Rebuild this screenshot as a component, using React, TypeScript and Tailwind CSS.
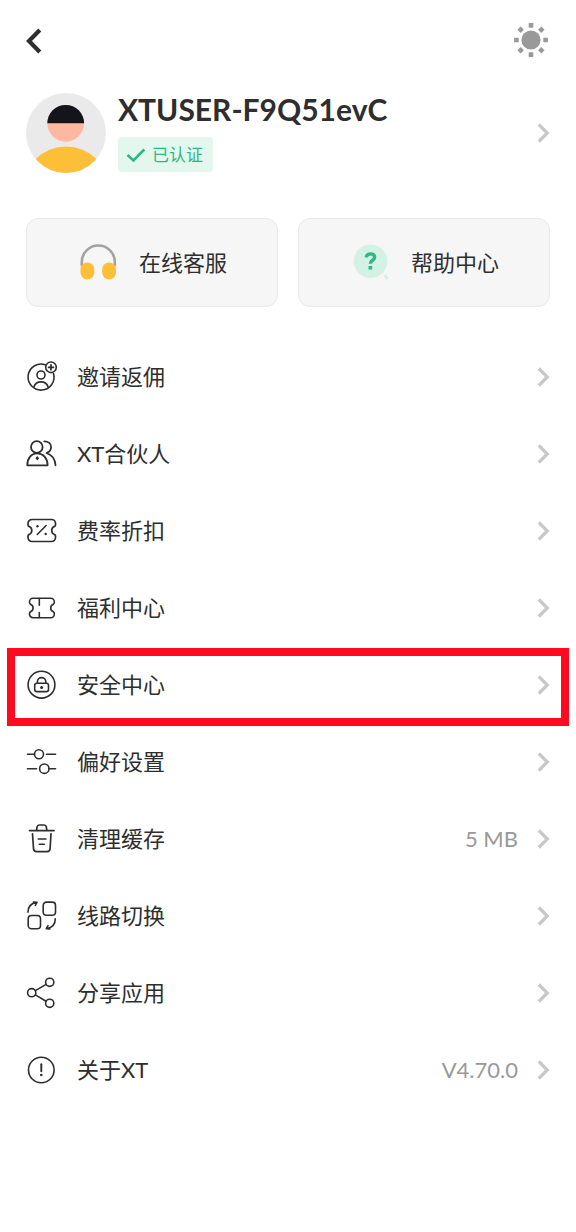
import type { ReactNode } from 'react';

function Chevron() {
  return (
    <svg className="h-6 w-4 shrink-0 text-[#c8c8c8]" viewBox="0 0 16 24" fill="none" stroke="currentColor" strokeWidth="3.2" aria-hidden="true">
      <path d="M4.8 3.5 13.3 12 4.8 20.5" />
    </svg>
  );
}

function LineIcon({ children }: { children: ReactNode }) {
  return (
    <svg
      className="size-8 shrink-0 overflow-visible text-[#2e2e2e]"
      viewBox="0 0 32 32"
      fill="none"
      stroke="currentColor"
      strokeWidth="1.6"
      strokeLinecap="round"
      strokeLinejoin="round"
      aria-hidden="true"
    >
      {children}
    </svg>
  );
}

const icons = {
  invite: (
    <LineIcon>
      <path d="M19.3 3.8A13 13 0 1 0 27.5 12.4" />
      <circle cx="25" cy="6.3" r="5.3" />
      <path d="M25 3.9v4.8M22.6 6.3h4.8" strokeWidth="1.8" />
      <circle cx="15" cy="14" r="4" />
      <path d="M7.8 26.3a7.5 7.5 0 0 1 14.4 0" />
    </LineIcon>
  ),
  partner: (
    <LineIcon>
      <circle cx="10.8" cy="9" r="5.8" strokeWidth="1.8" />
      <path d="M1.3 27.3c0-7.2 4-12 9.9-12s10.4 4.8 10.4 12z" strokeWidth="1.8" />
      <path d="m11.3 18 1.8 2.3-1.8 2.3-1.8-2.3z" fill="currentColor" stroke="none" />
      <path d="M18.2 3.3c4.2 0 6.9 2.5 6.900 5.800 0 2.900-1.700 5-4.600 5.900 5.300 1.700 8.600 6.200 9 12.300" strokeWidth="1.8" />
    </LineIcon>
  ),
  fee: (
    <LineIcon>
      <path
        d="M6 4.500h19.500a4 4 0 0 1 4 4v1.400c0 .8-.5 1.400-1.300 1.700a4.300 4.300 0 0 0 0 7.800c.8.3 1.300.9 1.300 1.700v1.400a4 4 0 0 1-4 4H6a4 4 0 0 1-4-4v-1.400c0-.8.5-1.400 1.300-1.700a4.300 4.300 0 0 0 0-7.800C2.500 11.300 2 10.700 2 9.900V8.500a4 4 0 0 1 4-4z"
        strokeWidth="1.7"
      />
      <path d="m11.300 19.500 8.800-9" />
      <circle cx="11.500" cy="11.200" r="1.200" fill="currentColor" stroke="none" />
      <circle cx="19.700" cy="19" r="1.200" fill="currentColor" stroke="none" />
    </LineIcon>
  ),
  welfare: (
    <LineIcon>
      <path d="M7 6.300h17.800a3.500 3.500 0 0 1 3.500 3.500v.8c0 .8-.4 1.300-1.100 1.700a4 4 0 0 0 0 7.400c.7.400 1.100.9 1.100 1.700v.8a3.500 3.500 0 0 1-3.500 3.500H7a3.500 3.500 0 0 1-3.500-3.500v-.8c0-.8.4-1.300 1.100-1.700a4 4 0 0 0 0-7.400c-.7-.4-1.100-.9-1.100-1.700v-.8A3.500 3.500 0 0 1 7 6.300z" />
      <path d="M13.300 6.500v6.700M13.300 20.500v5" />
    </LineIcon>
  ),
  lock: (
    <LineIcon>
      <circle cx="15.500" cy="15.700" r="13.400" />
      <rect x="8.700" y="14.300" width="13.800" height="8.300" rx="2.200" />
      <path d="M11.400 14.200v-1.400a4.200 4.200 0 0 1 8.400 0v1.400" />
      <circle cx="15.600" cy="18.500" r="1.500" fill="currentColor" stroke="none" />
    </LineIcon>
  ),
  sliders: (
    <LineIcon>
      <circle cx="13" cy="8.300" r="4.500" />
      <path d="M1.500 8.300h7M20.500 8.300h9" />
      <circle cx="18.300" cy="22.700" r="4.700" />
      <path d="M1.500 22.700h9M23 22.700h6.500" />
    </LineIcon>
  ),
  trash: (
    <LineIcon>
      <path d="M3.500 7.600h24.600M10.500 7.400l.6-3.500c.2-1.300.9-1.900 2.200-1.900h4.800c1.300 0 2 .6 2.200 1.900l.6 3.500" strokeWidth="1.7" />
      <path d="m6.500 10.800 1 14.700c.1 2 1.200 3.100 3.200 3.100h10.200c2 0 3.100-1.100 3.200-3.100l.9-14.700" strokeWidth="1.7" />
      <path d="M12.300 16H20M13.300 21.300h5" />
    </LineIcon>
  ),
  route: (
    <LineIcon>
      <rect x="17.200" y="2.100" width="12.300" height="13.200" rx="3.300" />
      <rect x="2.200" y="15.500" width="12.300" height="13.200" rx="3.300" />
      <path d="M2 12.300c0-5.300 3-9 8.600-9.900M7.400 2l3.600.3-1.700 3" />
      <path d="M29.300 18.700c0 5.300-3 9-8.600 9.900M23.900 29l-3.600-.3 1.700-3" />
    </LineIcon>
  ),
  share: (
    <LineIcon>
      <circle cx="5.700" cy="15.700" r="4.100" />
      <circle cx="23.700" cy="5.300" r="4.100" />
      <circle cx="23.700" cy="26.300" r="4.100" />
      <path d="m9.400 13.600 10.700-6.200M9.400 17.900l10.700 6.300" />
    </LineIcon>
  ),
  about: (
    <LineIcon>
      <circle cx="15.300" cy="16" r="12.800" />
      <path d="M15.300 10.300v7" strokeWidth="1.9" />
      <circle cx="15.300" cy="21" r="1.300" fill="currentColor" stroke="none" />
    </LineIcon>
  ),
};

type Item = { label: string; icon: ReactNode; value?: string; highlighted?: boolean };

const items: Item[] = [
  { label: '邀请返佣', icon: icons.invite },
  { label: 'XT合伙人', icon: icons.partner },
  { label: '费率折扣', icon: icons.fee },
  { label: '福利中心', icon: icons.welfare },
  { label: '安全中心', icon: icons.lock, highlighted: true },
  { label: '偏好设置', icon: icons.sliders },
  { label: '清理缓存', icon: icons.trash, value: '5 MB' },
  { label: '线路切换', icon: icons.route },
  { label: '分享应用', icon: icons.share },
  { label: '关于XT', icon: icons.about, value: 'V4.70.0' },
];

function MenuRow({ label, icon, value, highlighted }: Item) {
  return (
    <li className="relative">
      <button type="button" className="flex h-[77px] w-full items-center text-left">
        {icon}
        <span className="ml-[19px] text-[22px] leading-8">{label}</span>
        <span className="ml-auto mr-4 text-[22px] leading-8 text-[#999999]">{value}</span>
        <Chevron />
      </button>
      {highlighted && (
        <div className="pointer-events-none absolute -inset-x-[19px] -bottom-[3px] top-0.5 border-8 border-[#ff0a20]" />
      )}
    </li>
  );
}

function Avatar() {
  return (
    <svg className="size-20 shrink-0" viewBox="0 0 80 80" role="img" aria-label="头像">
      <clipPath id="avatar-clip">
        <circle cx="40" cy="40" r="40" />
      </clipPath>
      <g clipPath="url(#avatar-clip)">
        <rect width="80" height="80" fill="#eaeaea" />
        <circle cx="40" cy="96.500" r="43" fill="#fdbf37" />
        <circle cx="39.700" cy="30.300" r="18.400" fill="#ffb8a0" />
        <path d="M21.300 30.300a18.400 18.400 0 0 1 36.800 0z" fill="#14141c" />
      </g>
    </svg>
  );
}

const cardClass =
  'flex h-[89px] items-center justify-center gap-[22px] rounded-xl border border-[#e9e9e9] bg-[#f6f6f6] text-[22px] leading-8';

export default function App() {
  return (
    <main className="min-h-screen bg-white px-[26px] font-[Lato,'Noto_Sans_CJK_SC',sans-serif] text-[#2e2e2e]">
      <header className="flex h-20 items-center justify-between">
        <button type="button" aria-label="返回">
          <svg className="h-8 w-4" viewBox="0 0 16 32" fill="none" stroke="currentColor" strokeWidth="4.200">
            <path d="M13.800 6 3 17 13.800 28" />
          </svg>
        </button>
        <button type="button" aria-label="切换主题" className="text-[#999999]">
          <svg className="size-9" viewBox="-17 -18 36 36" fill="currentColor">
            <circle r="9.600" />
            {[0, 45, 90, 135, 180, 225, 270, 315].map((angle) => (
              <rect key={angle} x="-2.300" y="-16.900" width="4.600" height="4.600" rx=".4" transform={`rotate(${angle})`} />
            ))}
          </svg>
        </button>
      </header>

      <button type="button" className="mt-[13px] flex w-full items-center text-left">
        <Avatar />
        <span className="ml-3 flex flex-col items-start gap-[13px]">
          <span className="text-[30px] font-bold leading-[30px]">XTUSER-F9Q51evC</span>
          <span className="flex h-[35px] items-center gap-1.5 rounded bg-[#e3f7ef] pl-2 pr-2.5 text-[17px] leading-6 text-[#2db786]">
            <svg className="h-5 w-5" viewBox="0 0 20 20" fill="none" stroke="currentColor" strokeWidth="2.600" aria-hidden="true">
              <path d="m1.500 10 6 5.500L18.300 4.500" />
            </svg>
            已认证
          </span>
        </span>
        <span className="ml-auto flex">
          <Chevron />
        </span>
      </button>

      <section className="mt-[45px] grid grid-cols-2 gap-5">
        <button type="button" className={cardClass}>
          <svg className="size-10" viewBox="0 0 40 40" fill="none" aria-hidden="true">
            <path d="M4.800 23v-4a16.500 16.500 0 0 1 33 0v4" stroke="#a3a3a3" strokeWidth="2.600" />
            <rect x="3.500" y="19.500" width="13.800" height="17" rx="6.900" fill="#fdbf37" />
            <rect x="25.200" y="19.500" width="13.800" height="17" rx="6.900" fill="#fdbf37" />
          </svg>
          在线客服
        </button>
        <button type="button" className={cardClass}>
          <svg className="size-10" viewBox="0 0 40 40" fill="none" aria-hidden="true">
            <circle cx="21.500" cy="18.200" r="16.800" fill="#d3f1e4" />
            <path d="m35.500 32 3.300 3.700" stroke="#d3f1e4" strokeWidth="2.800" />
            <path d="M17.300 14.400c.2-2.200 1.800-3.500 4.200-3.500s4.100 1.300 4.100 3.300c0 3.100-4.200 3-4.200 6.500" stroke="#2db786" strokeWidth="3.400" />
            <rect x="19.500" y="23" width="3.700" height="3.500" fill="#2db786" />
          </svg>
          帮助中心
        </button>
      </section>

      <ul className="mt-[31px] pb-10">
        {items.map((item) => (
          <MenuRow key={item.label} {...item} />
        ))}
      </ul>
    </main>
  );
}
